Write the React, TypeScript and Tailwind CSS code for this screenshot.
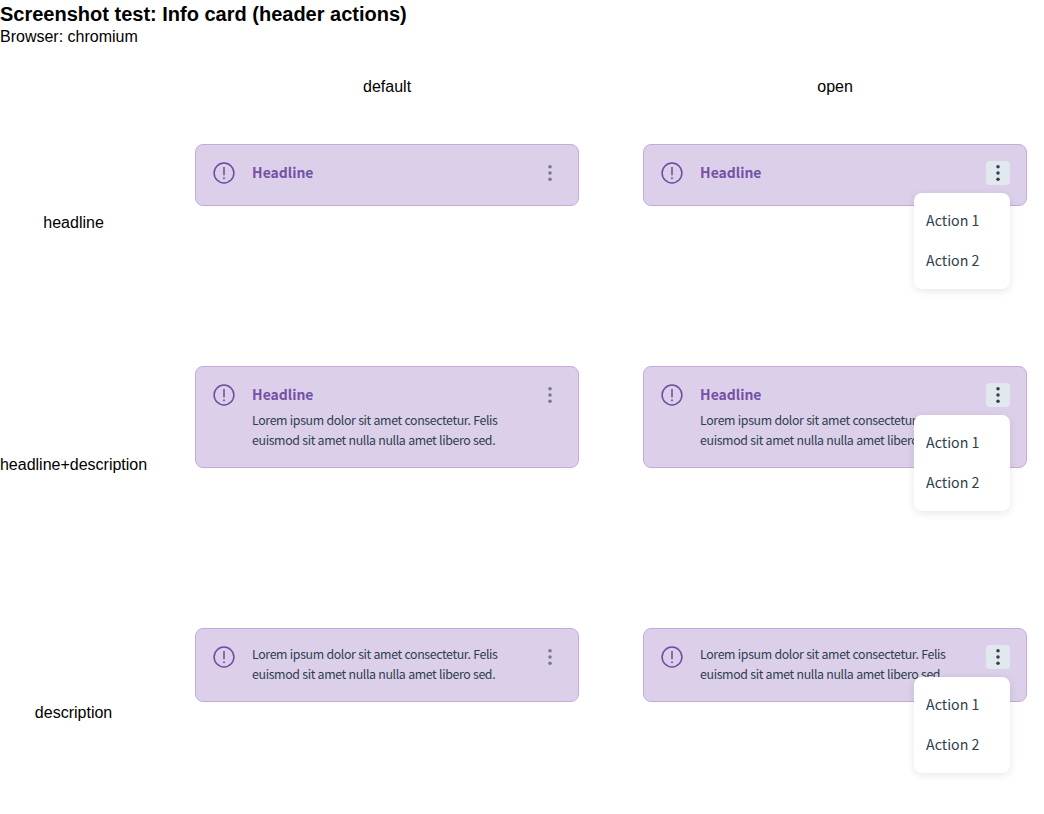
import React from "react";

const LOREM = "Lorem ipsum dolor sit amet consectetur. Felis euismod sit amet nulla nulla amet libero sed.";

function InfoIcon() {
  return (
    <svg className="size-6 shrink-0 text-[#7049a2]" viewBox="0 0 24 24" fill="none">
      <circle cx="12" cy="12" r="9.9" stroke="currentColor" strokeWidth="1.5" />
      <path d="M12 6v8.3" stroke="currentColor" strokeWidth="1.5" />
      <circle cx="12" cy="17.2" r="0.95" fill="currentColor" />
    </svg>
  );
}

function MoreIcon() {
  return (
    <svg className="size-6" viewBox="0 0 24 24" fill="currentColor">
      <circle cx="12" cy="5.75" r="1.75" />
      <circle cx="12" cy="12" r="1.75" />
      <circle cx="12" cy="18.25" r="1.75" />
    </svg>
  );
}

type CardProps = { headline?: boolean; description?: boolean; open?: boolean };

function InfoCard({ headline, description, open }: CardProps) {
  return (
    <div className="flex w-96 gap-4 rounded-lg border border-[#c3abdd] bg-[#dccfe9] p-4 font-['Noto_Sans_CJK_SC',sans-serif]">
      <InfoIcon />
      <div className="min-w-0 flex-1">
        {headline && (
          <div className="mb-1 pb-0.5 text-[13.95px] leading-[22px] font-bold text-[#7550a6]">
            Headline
          </div>
        )}
        {description && (
          <p className="-mt-px w-[254px] pb-px text-[12.35px] leading-5 tracking-[-0.375px] text-[#2e404d] [word-spacing:0.3px]">
            {LOREM}
          </p>
        )}
      </div>
      <div className="relative size-6 shrink-0">
        <button
          className={
            open
              ? "block size-6 rounded bg-[#e2e9ee] text-[#2e404d]"
              : "block size-6 rounded text-[#6b7c8c]"
          }
          aria-label="More actions"
        >
          <MoreIcon />
        </button>
        {open && (
          <ul className="absolute top-8 right-0 w-24 rounded-lg bg-white py-2 text-[14.2px] text-[#2e404d] shadow-[0_2px_8px_rgba(0,0,0,0.1)]">
            <li className="px-3 pb-0.5 leading-[38px] whitespace-nowrap">Action 1</li>
            <li className="px-3 pb-0.5 leading-[38px] whitespace-nowrap">Action 2</li>
          </ul>
        )}
      </div>
    </div>
  );
}

const ROWS = [
  { label: "headline", headline: true, description: false },
  { label: "headline+description", headline: true, description: true },
  { label: "description", headline: false, description: true },
];

export default function App() {
  return (
    <div className="h-[814px] w-[1044px] overflow-hidden bg-white font-['Liberation_Sans',Arial,sans-serif] text-base leading-[18px] text-black">
      <h1 className="h-7 text-xl leading-7 font-bold">Screenshot test: Info card (header actions)</h1>
      <p className="h-[50px]">Browser: chromium</p>
      <div className="grid grid-cols-[147.1px_416px_416px] grid-rows-[18px_190px_230px_202px] gap-8">
        <div />
        <div className="text-center">default</div>
        <div className="text-center">open</div>
        {ROWS.map((row) => (
          <React.Fragment key={row.label}>
            <div className="flex items-center justify-center whitespace-nowrap">{row.label}</div>
            <div className="p-4">
              <InfoCard headline={row.headline} description={row.description} />
            </div>
            <div className="p-4">
              <InfoCard headline={row.headline} description={row.description} open />
            </div>
          </React.Fragment>
        ))}
      </div>
    </div>
  );
}
